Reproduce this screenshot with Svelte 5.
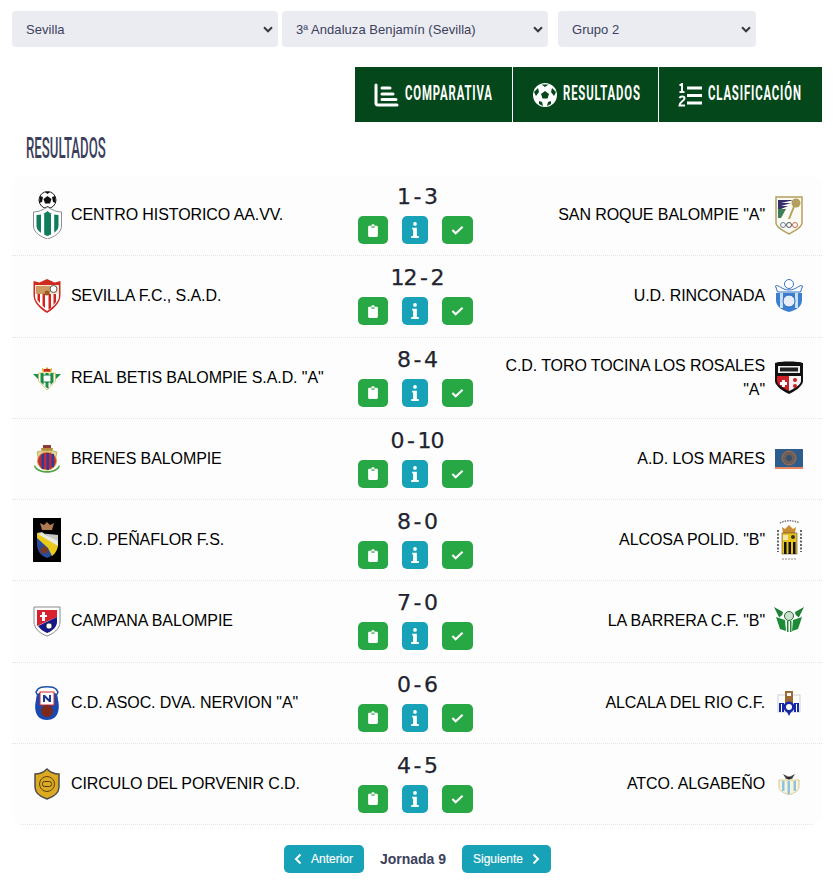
<script>
  const selects = [
    { cls: 's1', value: 'Sevilla' },
    { cls: 's2', value: '3ª Andaluza Benjamín (Sevilla)' },
    { cls: 's3', value: 'Grupo 2' }
  ];
  const matches = [
    { home: 'CENTRO HISTORICO AA.VV.', away: 'SAN ROQUE BALOMPIE "A"', score: '1 - 3', h: 'centro', a: 'roque' },
    { home: 'SEVILLA F.C., S.A.D.', away: 'U.D. RINCONADA', score: '12 - 2', h: 'sevilla', a: 'rinconada' },
    { home: 'REAL BETIS BALOMPIE S.A.D. "A"', away: 'C.D. TORO TOCINA LOS ROSALES "A"', score: '8 - 4', h: 'betis', a: 'toro' },
    { home: 'BRENES BALOMPIE', away: 'A.D. LOS MARES', score: '0 - 10', h: 'brenes', a: 'mares' },
    { home: 'C.D. PEÑAFLOR F.S.', away: 'ALCOSA POLID. "B"', score: '8 - 0', h: 'penaflor', a: 'alcosa' },
    { home: 'CAMPANA BALOMPIE', away: 'LA BARRERA C.F. "B"', score: '7 - 0', h: 'campana', a: 'barrera' },
    { home: 'C.D. ASOC. DVA. NERVION "A"', away: 'ALCALA DEL RIO C.F.', score: '0 - 6', h: 'nervion', a: 'alcala' },
    { home: 'CIRCULO DEL PORVENIR C.D.', away: 'ATCO. ALGABEÑO', score: '4 - 5', h: 'circulo', a: 'algabeno' }
  ];
</script>

{#snippet crest(id)}
  {#if id === 'centro'}
    <svg width="30" height="48" viewBox="0 0 30 48">
      <circle cx="15.500" cy="9" r="8.500" fill="#fff" stroke="#222" />
      <path d="M15.500 5l4 3-1.500 4.500h-5L11.500 8z" fill="#111" /><path d="M8 5l3 1-1 5-3 1zM23 5l-3 1 1 5 3 1zM12 17l3.500-2 3.500 2zM13 1h5l-2.500 2z" fill="#111" />
      <path d="M1.500 21c5 0 9-2 14-5 5 3 9 5 14 5v14c0 7-8 11-14 13C9.500 46 1.500 42 1.500 35z" fill="#fff" stroke="#8c8c8c" />
      <path d="M4.500 24c4 0 8-1 11-4 3 3 7 4 11 4v11c0 5-6 8-11 10-5-2-11-5-11-10z" fill="#0f7d5b" />
      <path d="M9 23h3.200v21H9zM19 23h3.200v20H19z" fill="#fff" />
    </svg>
  {:else if id === 'sevilla'}
    <svg width="30" height="36" viewBox="0 0 30 36">
      <path d="M1.500 3l6 1.500L15 1l7.500 3.500 6-1.500v14c0 8-7 14-13.500 18C8.500 31 1.500 25 1.500 17z" fill="#cf2a20" />
      <path d="M3 7h24v9H3z" fill="#f4e8d2" /><path d="M4 8h14v8H4z" fill="#cf9a62" /><circle cx="21.500" cy="11" r="3.500" fill="#fff" stroke="#555" />
      <path d="M3 16h24v2c0 6-6 11-12 15C9 29 3 24 3 18z" fill="#fff" />
      <path d="M5.500 16h2.500v9l-2.500-3zM10.500 16H13v14l-2.500-2.500zM16.500 16H19v14l-2.500 1.500zM21.500 16H24v8l-2.500 3z" fill="#d5231d" />
      <circle cx="15" cy="15" r="2.500" fill="#9c5a24" />
    </svg>
  {:else if id === 'betis'}
    <svg width="30" height="26" viewBox="0 0 30 26">
      <path d="M10.500 7l-.5-4 3 1.500L15 2l2 2.500L20 3l-.5 4z" fill="#d8a623" /><rect x="12" y="4" width="6" height="2.500" fill="#c8262a" />
      <path d="M1 9h28l-6 6H7z" fill="#1c8f45" />
      <path d="M6.500 8h17v8l-8.500 9-8.500-9z" fill="#fff" stroke="#d8b23c" stroke-width=".7" />
      <path d="M8.500 8h3v12l-3-3zM13.500 8h3v16l-3-2zM18.500 8h3v9l-3 3z" fill="#179447" />
      <rect x="11" y="10" width="8" height="7" fill="#fff" stroke="#137a3a" />
    </svg>
  {:else if id === 'brenes'}
    <svg width="30" height="30" viewBox="0 0 30 30">
      <path d="M3 21c3 8 21 8 24 0l1 1c-2 9-24 9-26 0z" fill="#52a447" />
      <path d="M9 4h12l-1 4H10z" fill="#b88a3a" /><path d="M11 1h8v3h-8z" fill="#8c3b3b" />
      <path d="M5 8c4-2 16-2 20 0l-1 5H6z" fill="#ded29e" stroke="#a8903d" stroke-width=".6" />
      <ellipse cx="15" cy="17" rx="9.500" ry="9" fill="#c5283d" stroke="#d7a52c" />
      <path d="M9.500 10h2.500v15H9.500zM14.500 9h2.500v17h-2.500zM19.500 10H22v13h-2.500z" fill="#2c3f96" />
    </svg>
  {:else if id === 'penaflor'}
    <svg width="30" height="44" viewBox="0 0 30 44">
      <rect x="1" width="28" height="44" fill="#000" />
      <path d="M8 5l4 2 3-3 3 3 4-2-2 7H10z" fill="#b07a52" />
      <path d="M5 15l21 2v9c0 7-5 12-11 14C9 38 5 33 5 26z" fill="#294b9c" />
      <path d="M5 15h6l15 11c0 4-2 9-6 12l-4-8L5 20z" fill="#e9c91a" />
      <path d="M5 15l21 2v8L10 14z" fill="#c7c7c2" /><path d="M6 16l20 12v-5L10 15z" fill="#e8e8e4" />
      <circle cx="12" cy="32" r="3.500" fill="#7c3b20" />
    </svg>
  {:else if id === 'campana'}
    <svg width="30" height="32" viewBox="0 0 30 32">
      <path d="M2 2h26v15c0 7-7 12-13 14C9 29 2 24 2 17z" fill="#fff" stroke="#8a8a8a" />
      <path d="M5 5h20v7L5 21z" fill="#d9202e" /><path d="M25 12v5c0 5-5 9-10 11-4-2-7-4-9-7z" fill="#16178a" />
      <path d="M10 7h3v3h2v2h-2v4h-3v-4H8v-2h2z" fill="#fff" /><circle cx="17" cy="21" r="3" fill="#fff" stroke="#222" stroke-width=".7" />
    </svg>
  {:else if id === 'nervion'}
    <svg width="30" height="36" viewBox="0 0 30 36">
      <path d="M6 4c3-3 15-3 18 0l2 3-2 4H6L4 7z" fill="#fff" stroke="#1f4fa8" stroke-width="1.500" />
      <path d="M4 15c0-3 1-6 3-7h16c2 1 3 4 3 7 2 8 1 20-11 20S2 23 4 15z" fill="#1848b0" />
      <rect x="8" y="7" width="14" height="13" fill="#fff" stroke="#d62b2b" />
      <path d="M11 17V10h2l4 4v-4h2v7h-2l-4-4v4z" fill="#1d3b94" />
      <circle cx="15" cy="26" r="6" fill="#7d2a18" />
    </svg>
  {:else if id === 'circulo'}
    <svg width="30" height="32" viewBox="0 0 30 32">
      <path d="M3 6c4 0 8-1 12-5 4 4 8 5 12 5v13c0 6-6 10-12 12C9 29 3 25 3 19z" fill="#dca921" stroke="#4d4d4a" stroke-width="1.500" />
      <circle cx="15" cy="16" r="7.500" fill="none" stroke="#5a4412" />
      <rect x="10.500" y="13.500" width="9" height="5" rx="2" fill="none" stroke="#4d3a10" />
    </svg>
  {:else if id === 'roque'}
    <svg width="30" height="40" viewBox="0 0 30 40">
      <path d="M2 2h26v26c0 5-8 8-13 11C10 36 2 33 2 28z" fill="#fbfaf2" stroke="#b3a05e" stroke-width="1.500" />
      <path d="M4 5h16L7 8h10L7 11h7l-7 3h5l-5 3H4z" fill="#35306b" /><path d="M4 14h8l-5 9H4z" fill="#3e7f55" />
      <circle cx="22" cy="8" r="4.500" fill="#b3a05e" />
      <path d="M22 4l2 0-8 20h-2z" fill="#b3a05e" />
      <circle cx="9" cy="30" r="2.500" fill="none" stroke="#667fa8" /><circle cx="15" cy="30" r="2.500" fill="none" stroke="#555" /><circle cx="21" cy="30" r="2.500" fill="none" stroke="#c7675c" />
    </svg>
  {:else if id === 'rinconada'}
    <svg width="30" height="34" viewBox="0 0 30 34">
      <circle cx="15" cy="5" r="4.500" fill="#fff" stroke="#3c74c2" />
      <path d="M1.500 7c3-2 6 4 13.500 4S25.500 5 28.500 7l-2 6H3.500z" fill="#fff" stroke="#2e6cc0" />
      <path d="M2 14h26v7c0 7-6 10-13 12C8 31 2 28 2 21z" fill="#3b7fd0" />
      <path d="M6 14h3v15H6zM21 14h3v15h-3z" fill="#fff" opacity=".75" />
      <circle cx="15" cy="22" r="6" fill="#e7eef9" stroke="#2e6cc0" />
    </svg>
  {:else if id === 'toro'}
    <svg width="30" height="34" viewBox="0 0 30 34">
      <path d="M1 2c5-2 23-2 28 0v18c0 5-9 11-14 13C10 31 1 25 1 20z" fill="#111" />
      <rect x="4" y="5" width="22" height="7" fill="#eee" /><rect x="6" y="6.500" width="18" height="4" fill="#222" />
      <path d="M3 15h12v15c-4-2-12-6-12-10z" fill="#cf1f26" /><path d="M15 15h12v5c0 4-8 8-12 10z" fill="#f5f5f5" />
      <path d="M8 19h3v2h2v3h-2v2H8v-2H6v-3h2z" fill="#fff" /><circle cx="21" cy="19" r="2" fill="#cf1f26" /><circle cx="21" cy="25" r="2" fill="#cf1f26" />
    </svg>
  {:else if id === 'mares'}
    <svg width="30" height="22" viewBox="0 0 30 22">
      <rect x="1" y="1" width="28" height="20" fill="#2e5c8c" /><rect x="1" y="19" width="28" height="2" fill="#e88662" />
      <circle cx="15" cy="10" r="7" fill="#6d5f58" stroke="#a0724c" /><circle cx="15" cy="10" r="3" fill="#34506f" />
    </svg>
  {:else if id === 'alcosa'}
    <svg width="30" height="44" viewBox="0 0 30 44">
      <path d="M6 5c5-3 14-3 19 0" fill="none" stroke="#777" stroke-width="1.500" stroke-dasharray="1.500 1" />
      <path d="M4 12v22M27 12v22" stroke="#666" stroke-width="2" stroke-dasharray="2 1.500" />
      <path d="M8 41h15" stroke="#888" stroke-dasharray="2 1" />
      <path d="M8 9l3 2 4-4 4 4 3-2-1 6H9z" fill="#c98c33" />
      <rect x="8" y="15" width="15" height="21" fill="#e9c41e" stroke="#433" stroke-width=".5" />
      <path d="M10 24h2.500v12H10zM14.500 24H17v12h-2.500zM19 24h2.500v12H19z" fill="#111" />
      <rect x="9" y="17" width="5" height="5" fill="#f0e6b0" /><circle cx="19" cy="19" r="2" fill="#332" />
    </svg>
  {:else if id === 'barrera'}
    <svg width="30" height="30" viewBox="0 0 30 30">
      <path d="M0 1l9 5-2 9zM30 1l-9 5 2 9z" fill="#1f7f35" />
      <path d="M3 13l8-6h8l8 6-4 11-8 5-8-5z" fill="#fff" />
      <path d="M2 11l9 3 1 11-6-2zM28 11l-9 3-1 11 6-2z" fill="#1d8a35" />
      <circle cx="15" cy="10" r="4.500" fill="#cde0cf" stroke="#1d6b30" /><path d="M13 15h1.500v11H13zM16 15h1.500v11H16z" fill="#1d8a35" />
    </svg>
  {:else if id === 'alcala'}
    <svg width="30" height="26" viewBox="0 0 30 26">
      <rect x="4" y="5" width="22" height="17" fill="#fff" stroke="#cfcfcf" />
      <rect x="11" y="1" width="8" height="12" fill="#9c6a33" /><rect x="13" y="3" width="4" height="3" fill="#fff" />
      <path d="M5 13h5v9H5zM20 13h5v9h-5z" fill="#1428a8" /><path d="M7 14h1v8H7zM22 14h1v8h-1z" fill="#fff" />
      <circle cx="15" cy="17" r="5.500" fill="#1428a8" /><circle cx="15" cy="17" r="3" fill="#fff" /><path d="M13 22h4l-2 4z" fill="#1428a8" />
    </svg>
  {:else}
    <svg width="30" height="22" viewBox="0 0 30 22">
      <path d="M5 7h20v7c0 4-5 6-10 8-5-2-10-4-10-8z" fill="#f8f3dd" stroke="#d8c892" />
      <path d="M8 8h2.500v10H8zM13.500 8H16v13h-2.500zM19.500 8H22v10h-2.500z" fill="#8dc3dc" />
      <path d="M9 1l6 3 6-3-3 5h-6z" fill="#4a4a4a" /><circle cx="15" cy="5" r="1.500" fill="#222" />
    </svg>
  {/if}
{/snippet}

<div class="page">
  <div class="filters">
    {#each selects as s}
      <label class="select {s.cls}">
        <select><option>{s.value}</option></select>
        <svg class="chev" width="10" height="7" viewBox="0 0 10 7"><path d="M1 1.300l4 4 4-4" fill="none" stroke="#343a40" stroke-width="2" /></svg>
      </label>
    {/each}
  </div>

  <nav class="tabs">
    <div class="tab t1">
      <svg width="25" height="24" viewBox="0 0 25 24" fill="none" stroke="#fff" stroke-width="3" stroke-linecap="round">
        <path d="M2 2v18c0 1.500 1 2 2 2h19" /><path d="M8 5h8M8 11h11M8 16.500h14" />
      </svg>
      <span class="label"><span>COMPARATIVA</span></span>
    </div>
    <div class="tab t2">
      <svg width="24" height="24" viewBox="0 0 24 24">
        <circle cx="12" cy="12" r="12" fill="#fff" />
        <path d="M12 8l4 3-1.500 4.500h-5L8 11z" fill="#03471a" />
        <path d="M8.500 1.500h7L12 4zM1 9l4-4 1 4-3 4zM23 9l-4-4-1 4 3 4zM6 18l3 1 1 4-4-2zM18 18l-3 1-1 4 4-2z" fill="#03471a" />
      </svg>
      <span class="label"><span>RESULTADOS</span></span>
    </div>
    <div class="tab t3">
      <svg width="24" height="24" viewBox="0 0 24 24" fill="none" stroke="#fff" stroke-width="3">
        <path d="M9 5h15M9 12.500h15M9 20h15" />
        <path d="M1.500 2.500L4 1v8M1.500 9h5" stroke-width="2" /><path d="M1.500 15c1-2 5-2 5 .5 0 2-5 3.500-5 7h5.500" stroke-width="2" />
      </svg>
      <span class="label"><span>CLASIFICACIÓN</span></span>
    </div>
  </nav>

  <h2 class="title"><span>RESULTADOS</span></h2>

  <section class="card">
    {#each matches as m}
      <article class="row">
        <div class="team">
          <div class="crest">{@render crest(m.h)}</div>
          <span class="name">{m.home}</span>
        </div>
        <div class="mid">
          <div class="score">{m.score}</div>
          <div class="actions">
            <span class="btn green b1">
              <svg width="10" height="13" viewBox="0 0 12 16"><path d="M1.500 2H4c0-2.400 4-2.400 4 0h2.500c.8 0 1.500.7 1.500 1.500v11c0 .8-.7 1.500-1.500 1.500h-9C.7 16 0 15.300 0 14.500v-11C0 2.700.7 2 1.500 2z" fill="#fff" /><rect x="4" y="3" width="4" height="1.500" fill="#28a745" /></svg>
            </span>
            <span class="btn teal b2">
              <svg width="8" height="16" viewBox="0 0 8 17"><circle cx="4" cy="2" r="2" fill="#fff" /><path d="M1 6h5v9h2v2H0v-2h2V8H1z" fill="#fff" /></svg>
            </span>
            <span class="btn green b3">
              <svg width="13" height="10" viewBox="0 0 14 10"><path d="M1.500 5l3.500 3.500L12.500 1.500" fill="none" stroke="#fff" stroke-width="2.200" /></svg>
            </span>
          </div>
        </div>
        <div class="team away">
          <span class="name">{m.away}</span>
          <div class="crest">{@render crest(m.a)}</div>
        </div>
      </article>
    {/each}
  </section>

  <div class="pager">
    <span class="pbtn prev">
      <svg width="8" height="12" viewBox="0 0 8 12"><path d="M6.500 1.500L2 6l4.500 4.500" fill="none" stroke="#fff" stroke-width="2" /></svg>
      Anterior
    </span>
    <strong>Jornada 9</strong>
    <span class="pbtn next">
      Siguiente
      <svg width="8" height="12" viewBox="0 0 8 12"><path d="M1.500 1.500L6 6l-4.500 4.500" fill="none" stroke="#fff" stroke-width="2" /></svg>
    </span>
  </div>
</div>

<style>
  :global(body) { margin: 0; background: #fff; }
  .page { width: 834px; height: 880px; overflow: hidden; font-family: "Liberation Sans", Arial, sans-serif; color: #000; }
  .filters { display: flex; padding: 11px 0 0 12px; }
  .select { position: relative; display: block; height: 36px; }
  .s1 { width: 266px; margin-right: 4px; }
  .s2 { width: 266px; margin-right: 10px; }
  .s3 { width: 198px; }
  select { appearance: none; width: 100%; height: 100%; border: 0; border-radius: 4px; background: #ebecf2; padding: 0 14px; font: 13px "Liberation Sans", sans-serif; letter-spacing: .05px; color: #3b3f5c; }
  .chev { position: absolute; right: 5px; top: 15px; pointer-events: none; }
  .tabs { display: flex; width: 467px; height: 55px; margin: 20px 0 0 355px; background: #03471a; color: #fff; }
  .tab { display: flex; align-items: center; justify-content: center; gap: 6px; box-sizing: border-box; border-left: 1px solid #fff; }
  .t1 { width: 157px; border-left: 0; }
  .t2 { width: 146px; }
  .t3 { width: 164px; }
  .label { display: block; height: 24px; margin-top: -3px; }
  .t1 .label { width: 88px; }
  .t2 .label { width: 76px; }
  .t3 .label { width: 95px; }
  .label span { display: block; font: 700 21px/24px Roboto, sans-serif; letter-spacing: 1.6px; white-space: nowrap; transform-origin: left center; transform: scaleX(.54); }
  .title { margin: 12px 0 0 26px; height: 28px; font: 500 29px/28px Roboto, sans-serif; color: #3b3f5c; }
  .title span { display: block; white-space: nowrap; transform-origin: left center; transform: scaleX(.455); }
  .card { margin: 13px 12px 0; background: #fdfdfd; border-radius: 12px; overflow: hidden; }
  .row { display: grid; grid-template-columns: 1fr 130px 1fr; height: 81.25px; box-sizing: border-box; border-bottom: 1px dotted #e4e4e4; }
  .team { display: flex; align-items: center; gap: 9px; padding: 0 0 0 20px; min-width: 0; }
  .away { justify-content: flex-end; padding: 0 18px 0 0; text-align: right; }
  .crest { flex: 0 0 30px; display: flex; justify-content: center; }
  .crest svg { display: block; }
  .name { font-size: 16px; line-height: 24px; letter-spacing: -.09px; }
  .mid { display: flex; flex-direction: column; align-items: center; padding-top: 9px; }
  .score { font: 400 22px/26px "DejaVu Sans", sans-serif; word-spacing: -2.5px; letter-spacing: -1px; -webkit-text-stroke: .25px #1f2430; color: #1f2430; }
  .actions { display: flex; gap: 14px; margin: 6px 3px 0 0; }
  .btn { display: flex; align-items: center; justify-content: center; height: 28px; border-radius: 5px; }
  .b1 { width: 30px; }
  .b2 { width: 26px; }
  .b3 { width: 31px; }
  .green { background: #28a745; }
  .teal { background: #17a2b8; }
  .pager { display: flex; align-items: center; margin: 20px 0 0 284px; height: 28px; font-size: 12px; }
  .pbtn { display: flex; align-items: center; height: 28px; gap: 9px; background: #17a2b8; color: #fff; border-radius: 5px; box-sizing: border-box; -webkit-text-stroke: .15px #fff; }
  .prev { width: 80px; padding-left: 10px; }
  .next { width: 89px; padding-left: 11px; }
  .pager strong { width: 98px; text-align: center; font-size: 14px; color: #3b3f5c; margin-top: -1px; }
</style>
